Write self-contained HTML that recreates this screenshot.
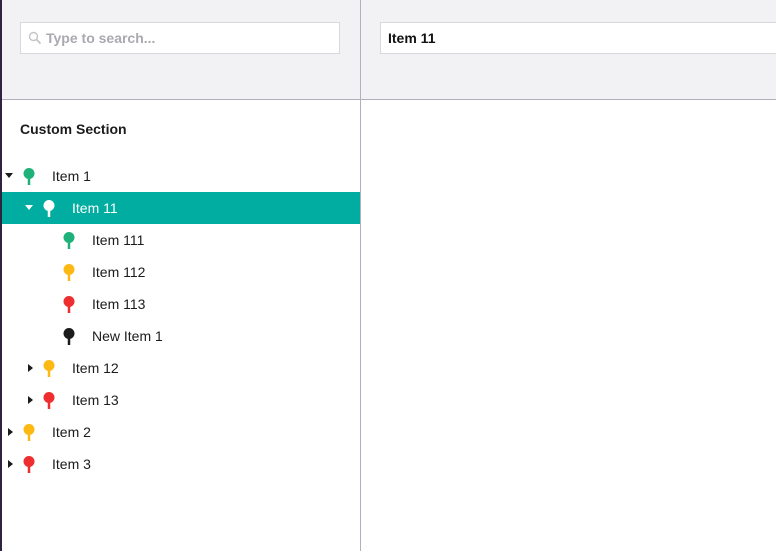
<!DOCTYPE html>
<html><head><style>
*{margin:0;padding:0;box-sizing:border-box}
body{width:776px;height:551px;overflow:hidden;background:#fff;font-family:"Liberation Sans",sans-serif;position:relative}
.lb{position:absolute;left:0;top:0;width:2px;height:551px;background:#2e2440}
.hdr{position:absolute;left:2px;top:0;width:774px;height:100px;background:#f2f2f4;border-bottom:1px solid #b3b0bd}
.vd{position:absolute;left:360px;top:0;width:1px;height:551px;background:#b3b0bd}
.in{position:absolute;top:22px;height:32px;background:#fff;border:1px solid #d8d8dc;font-size:14px;font-weight:bold;line-height:30px}
.sec{position:absolute;left:20px;top:121px;font-size:14px;font-weight:bold;color:#1b1b1b}
.row{position:absolute;left:2px;width:358px;height:32px;font-size:14px;color:#1b1b1b;line-height:32px}
.row.sel{background:#00ada0;color:#fff}
.row span{position:absolute}
.ar{position:absolute;top:13px;width:0;height:0}
.ad{border-left:4px solid transparent;border-right:4px solid transparent;border-top:5px solid currentColor}
.arr{border-top:4px solid transparent;border-bottom:4px solid transparent;border-left:5px solid currentColor;top:12px}
svg{position:absolute;top:8px}
</style></head><body>
<div class="hdr"></div>
<div class="lb"></div>
<div class="vd"></div>
<div class="in" style="left:20px;width:320px;color:#a9a9b0;padding-left:25px">Type to search...
<svg style="left:7px;top:8px" width="14" height="14" viewBox="0 0 14 14"><circle cx="5.5" cy="5.5" r="4" fill="none" stroke="#c4c4c8" stroke-width="1.4"/><path d="M8.5 8.5L12.5 12.5" stroke="#c4c4c8" stroke-width="1.8"/></svg></div>
<div class="in" style="left:380px;width:400px;color:#111;padding-left:7px">Item 11</div>
<div class="sec">Custom Section</div>

<div class="row" style="top:160px"><i class="ar ad" style="left:3px"></i><svg style="left:21px" width="12" height="17" viewBox="0 0 12 17"><circle cx="6" cy="5.5" r="5.5" fill="#1eb27a"/><rect x="4.75" y="9" width="2.5" height="8" fill="#1eb27a"/></svg><span style="left:50px">Item 1</span></div>
<div class="row sel" style="top:192px"><i class="ar ad" style="left:23px"></i><svg style="left:41px" width="12" height="17" viewBox="0 0 12 17"><circle cx="6" cy="5.5" r="5.5" fill="#fff"/><rect x="4.75" y="9" width="2.5" height="8" fill="#fff"/></svg><span style="left:70px">Item 11</span></div>
<div class="row" style="top:224px"><svg style="left:61px" width="12" height="17" viewBox="0 0 12 17"><circle cx="6" cy="5.5" r="5.5" fill="#1eb27a"/><rect x="4.75" y="9" width="2.5" height="8" fill="#1eb27a"/></svg><span style="left:90px">Item 111</span></div>
<div class="row" style="top:256px"><svg style="left:61px" width="12" height="17" viewBox="0 0 12 17"><circle cx="6" cy="5.5" r="5.5" fill="#fdb913"/><rect x="4.75" y="9" width="2.5" height="8" fill="#fdb913"/></svg><span style="left:90px">Item 112</span></div>
<div class="row" style="top:288px"><svg style="left:61px" width="12" height="17" viewBox="0 0 12 17"><circle cx="6" cy="5.5" r="5.5" fill="#ee2e2e"/><rect x="4.75" y="9" width="2.5" height="8" fill="#ee2e2e"/></svg><span style="left:90px">Item 113</span></div>
<div class="row" style="top:320px"><svg style="left:61px" width="12" height="17" viewBox="0 0 12 17"><circle cx="6" cy="5.5" r="5.5" fill="#1b1b1b"/><rect x="4.75" y="9" width="2.5" height="8" fill="#1b1b1b"/></svg><span style="left:90px">New Item 1</span></div>
<div class="row" style="top:352px"><i class="ar arr" style="left:26px"></i><svg style="left:41px" width="12" height="17" viewBox="0 0 12 17"><circle cx="6" cy="5.5" r="5.5" fill="#fdb913"/><rect x="4.75" y="9" width="2.5" height="8" fill="#fdb913"/></svg><span style="left:70px">Item 12</span></div>
<div class="row" style="top:384px"><i class="ar arr" style="left:26px"></i><svg style="left:41px" width="12" height="17" viewBox="0 0 12 17"><circle cx="6" cy="5.5" r="5.5" fill="#ee2e2e"/><rect x="4.75" y="9" width="2.5" height="8" fill="#ee2e2e"/></svg><span style="left:70px">Item 13</span></div>
<div class="row" style="top:416px"><i class="ar arr" style="left:6px"></i><svg style="left:21px" width="12" height="17" viewBox="0 0 12 17"><circle cx="6" cy="5.5" r="5.5" fill="#fdb913"/><rect x="4.75" y="9" width="2.5" height="8" fill="#fdb913"/></svg><span style="left:50px">Item 2</span></div>
<div class="row" style="top:448px"><i class="ar arr" style="left:6px"></i><svg style="left:21px" width="12" height="17" viewBox="0 0 12 17"><circle cx="6" cy="5.5" r="5.5" fill="#ee2e2e"/><rect x="4.75" y="9" width="2.5" height="8" fill="#ee2e2e"/></svg><span style="left:50px">Item 3</span></div>
</body></html>
